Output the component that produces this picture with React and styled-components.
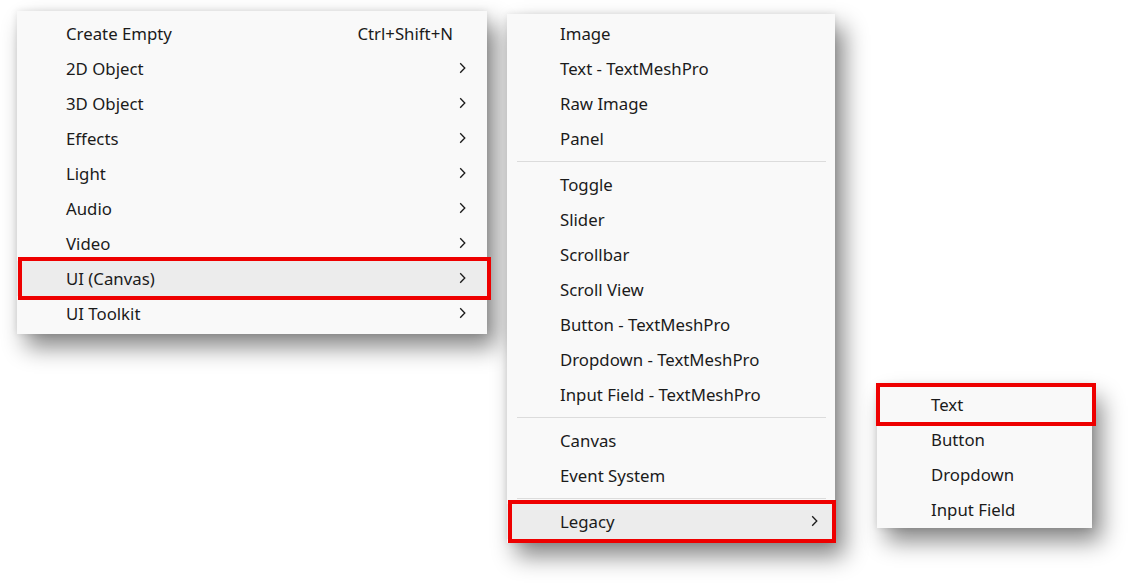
import React from "react";
import styled, { createGlobalStyle } from "styled-components";

const Global = createGlobalStyle`
  html, body { margin: 0; padding: 0; background: #ffffff; }
  body { font-family: "Noto Sans", "Open Sans", sans-serif; }
`;

const Desk = styled.div`
  position: relative;
  width: 1134px;
  height: 588px;
  overflow: hidden;
  background: #ffffff;
`;

const Menu = styled.div`
  position: absolute;
  left: ${(p) => p.$x}px;
  top: ${(p) => p.$y}px;
  width: ${(p) => p.$w}px;
  padding: ${(p) => p.$padTop}px 0 ${(p) => p.$padBottom}px;
  box-sizing: border-box;
  background: #f9f9f9;
  display: flex;
  flex-direction: column;
  box-shadow: 9px 13px 22px rgba(0, 0, 0, 0.48), 0 0 7px rgba(0, 0, 0, 0.1);
  z-index: ${(p) => p.$z};
`;

const Row = styled.div`
  position: relative;
  height: 35px;
  display: flex;
  align-items: center;
  padding-left: ${(p) => p.$indent}px;
  padding-right: ${(p) => p.$endPad}px;
  font-size: 16.8px;
  color: #1b1b1b;
  background: ${(p) => (p.$active ? "#ececec" : "transparent")};
  white-space: nowrap;

  ${(p) =>
    p.$marked &&
    `
    &::after {
      content: "";
      position: absolute;
      left: ${p.$markLeft}px;
      right: ${p.$markRight}px;
      top: -4px;
      bottom: -4px;
      border: 4px solid #ee0000;
      pointer-events: none;
    }
  `}
`;

const Label = styled.span`
  flex: 1;
`;

const Shortcut = styled.span`
  color: #1b1b1b;
  margin-right: 13px;
`;

const Separator = styled.div`
  height: 11px;
  display: flex;
  align-items: center;
  padding: 0 9px 0 10px;
  &::before {
    content: "";
    flex: 1;
    height: 1px;
    background: #dcdcdc;
  }
`;

const Chevron = () => (
  <svg width="7" height="12" viewBox="0 0 7 12" fill="none">
    <path d="M1.2 1.2 L5.8 6 L1.2 10.8" stroke="#1b1b1b" strokeWidth="1.3" />
  </svg>
);

const mainItems = [
  { label: "Create Empty", shortcut: "Ctrl+Shift+N" },
  { label: "2D Object", sub: true },
  { label: "3D Object", sub: true },
  { label: "Effects", sub: true },
  { label: "Light", sub: true },
  { label: "Audio", sub: true },
  { label: "Video", sub: true },
  { label: "UI (Canvas)", sub: true, active: true },
  { label: "UI Toolkit", sub: true },
];

const canvasItems = [
  { label: "Image" },
  { label: "Text - TextMeshPro" },
  { label: "Raw Image" },
  { label: "Panel" },
  { sep: true },
  { label: "Toggle" },
  { label: "Slider" },
  { label: "Scrollbar" },
  { label: "Scroll View" },
  { label: "Button - TextMeshPro" },
  { label: "Dropdown - TextMeshPro" },
  { label: "Input Field - TextMeshPro" },
  { sep: true },
  { label: "Canvas" },
  { label: "Event System" },
  { sep: true },
  { label: "Legacy", sub: true, active: true },
];

const legacyItems = [
  { label: "Text", marked: true },
  { label: "Button" },
  { label: "Dropdown" },
  { label: "Input Field" },
];

function MenuItems({ items, indent, endPad, markLeft, markRight }) {
  return items.map((it, i) =>
    it.sep ? (
      <Separator key={i} />
    ) : (
      <Row
        key={i}
        $indent={indent}
        $endPad={endPad}
        $active={it.active}
        $marked={it.active || it.marked}
        $markLeft={markLeft}
        $markRight={markRight}
      >
        <Label>{it.label}</Label>
        {it.shortcut && <Shortcut>{it.shortcut}</Shortcut>}
        {it.sub && <Chevron />}
      </Row>
    )
  );
}

export default function App() {
  return (
    <>
      <Global />
      <Desk>
        <Menu $x={17} $y={11} $w={470} $padTop={4.5} $padBottom={3.5} $z={1}>
          <MenuItems items={mainItems} indent={49} endPad={21} markLeft={1} markRight={-4} />
        </Menu>
        <Menu $x={507} $y={14} $w={328} $padTop={1.5} $padBottom={4} $z={2}>
          <MenuItems items={canvasItems} indent={53} endPad={17} markLeft={1} markRight={-1} />
        </Menu>
        <Menu $x={877} $y={385} $w={215} $padTop={1.5} $padBottom={1.5} $z={3}>
          <MenuItems items={legacyItems} indent={54} endPad={17} markLeft={-1} markRight={-4} />
        </Menu>
      </Desk>
    </>
  );
}
